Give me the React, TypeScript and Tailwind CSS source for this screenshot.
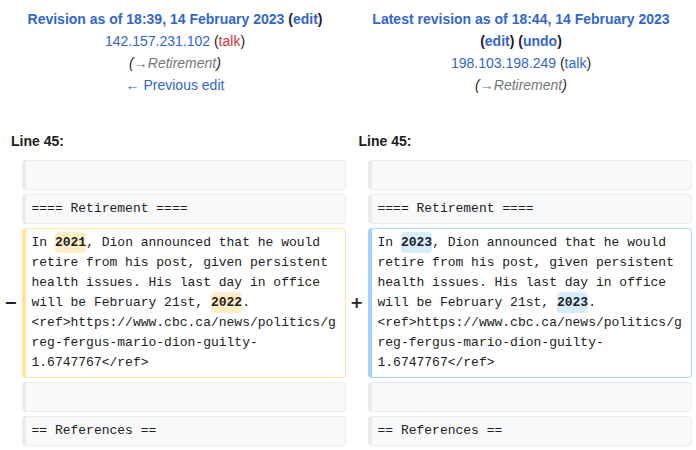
import React from "react";

const sans = { fontFamily: '"Liberation Sans", Arial, sans-serif' };

function Marker({ ch }: { ch?: string }) {
  return (
    <div
      className="flex items-center justify-end text-[16px] font-bold text-[#202122] leading-[22px]"
      style={{ fontFamily: '"DejaVu Sans", "Liberation Sans", sans-serif' }}
    >
      {ch}
    </div>
  );
}

function Box({
  kind,
  children,
}: {
  kind: "ctx" | "del" | "add";
  children?: React.ReactNode;
}) {
  const cls =
    kind === "ctx"
      ? "bg-[#f8f9fa] border-[#eaecf0]"
      : kind === "del"
      ? "bg-white border-[#ffe49c]"
      : "bg-white border-[#a3d3ff]";
  return (
    <div
      className={`${cls} min-w-0 border border-l-4 rounded-[4px] py-[4px] pl-[6px] pr-[6px] min-h-[30px] text-[13px] leading-[20px] text-[#202122] whitespace-pre-wrap break-words`}
      style={{ fontFamily: '"Liberation Mono", "Courier New", monospace' }}
    >
      {children}
    </div>
  );
}

function Chg({ kind, children }: { kind: "del" | "add"; children: React.ReactNode }) {
  return (
    <span
      className={`${kind === "del" ? "bg-[#feeec8]" : "bg-[#d8ecff]"} font-bold rounded-[4px] py-[3px]`}
    >
      {children}
    </span>
  );
}

export default function App() {
  const link = "text-[#3366cc]";
  return (
    <div className="w-[696px] h-[450px] bg-white overflow-hidden" style={sans}>
      <div className="grid grid-cols-[13.5px_minmax(0,1fr)_13.5px_minmax(0,1fr)] gap-[4px] p-[4px] text-[14px] text-[#202122]">
        {/* headers */}
        <div className="col-span-2 min-w-0 text-center leading-[22px] pt-[4px] pb-[26px]">
          <div className="font-bold">
            <span className={link}>Revision as of 18:39, 14 February 2023</span> (
            <span className={link}>edit</span>)
          </div>
          <div>
            <span className={link}>142.157.231.102</span> (
            <span className="text-[#d73333]">talk</span>)
          </div>
          <div className="italic">
            (<span className="text-[#72777d]">→Retirement</span>)
          </div>
          <div>
            <span className={link}>← Previous edit</span>
          </div>
        </div>
        <div className="col-span-2 min-w-0 text-center leading-[22px] pt-[4px] pb-[26px]">
          <div className="font-bold">
            <span className={link}>Latest revision as of 18:44, 14 February 2023</span>
          </div>
          <div className="font-bold">
            (<span className={link}>edit</span>) (<span className={link}>undo</span>)
          </div>
          <div>
            <span className={link}>198.103.198.249</span> (
            <span className={link}>talk</span>)
          </div>
          <div className="italic">
            (<span className="text-[#72777d]">→Retirement</span>)
          </div>
        </div>

        {/* line numbers */}
        <div className="col-span-2 font-bold leading-[22px] py-[4px] pl-[7px]">Line 45:</div>
        <div className="col-span-2 font-bold leading-[22px] py-[4px] pl-[8.5px]">Line 45:</div>

        {/* row: empty */}
        <Marker />
        <Box kind="ctx" />
        <Marker />
        <Box kind="ctx" />

        {/* row: heading */}
        <Marker />
        <Box kind="ctx">==== Retirement ====</Box>
        <Marker />
        <Box kind="ctx">==== Retirement ====</Box>

        {/* row: changed */}
        <Marker ch="−" />
        <Box kind="del">
          In <Chg kind="del">2021</Chg>, Dion announced that he would retire from his post, given
          persistent health issues. His last day in office will be February 21st,{" "}
          <Chg kind="del">2022</Chg>. &lt;ref&gt;https://www.cbc.ca/news/politics/greg-fergus-mario-dion-guilty-1.6747767&lt;/ref&gt;
        </Box>
        <Marker ch="+" />
        <Box kind="add">
          In <Chg kind="add">2023</Chg>, Dion announced that he would retire from his post, given
          persistent health issues. His last day in office will be February 21st,{" "}
          <Chg kind="add">2023</Chg>. &lt;ref&gt;https://www.cbc.ca/news/politics/greg-fergus-mario-dion-guilty-1.6747767&lt;/ref&gt;
        </Box>

        {/* row: empty */}
        <Marker />
        <Box kind="ctx" />
        <Marker />
        <Box kind="ctx" />

        {/* row: references */}
        <Marker />
        <Box kind="ctx">== References ==</Box>
        <Marker />
        <Box kind="ctx">== References ==</Box>
      </div>
    </div>
  );
}
